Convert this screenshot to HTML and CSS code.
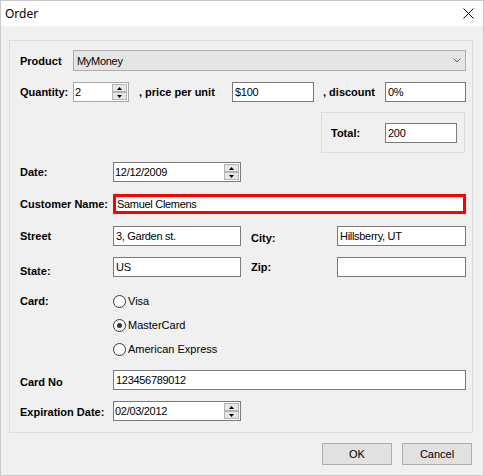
FILE: index.html
```html
<!DOCTYPE html>
<html>
<head>
<meta charset="utf-8">
<title>Order</title>
<link rel="stylesheet" href="styles.css">
</head>
<body>
<div class="window">
  <div class="titlebar">
    <span class="title">Order</span>
    <svg class="close" width="11" height="11" viewBox="0 0 11 11"><path d="M0.5 0.5 L10.5 10.5 M10.5 0.5 L0.5 10.5" stroke="#000" stroke-width="1" fill="none"/></svg>
  </div>
  <div class="client">
    <div class="panel">
      <div class="row r-product">
        <span class="lbl w53">Product</span>
        <div class="combo">
          <span class="val">MyMoney</span>
          <svg class="chev" width="8" height="5" viewBox="0 0 8 5"><path d="M0.5 0.5 L4 4 L7.5 0.5" stroke="#606060" stroke-width="1" fill="none"/></svg>
        </div>
      </div>
      <div class="row r-qty">
        <span class="lbl w53">Quantity:</span>
        <div class="spin light w56">
          <span class="val">2</span>
          <div class="spinbtns">
            <div class="sb"><svg width="5" height="3" viewBox="0 0 5 3"><polygon points="0,3 2.5,0 5,3" fill="#000"/></svg></div>
            <div class="sb"><svg width="5" height="3" viewBox="0 0 5 3"><polygon points="0,0 5,0 2.5,3" fill="#000"/></svg></div>
          </div>
        </div>
        <span class="lbl w93 ml10">, price per unit</span>
        <div class="tb w82"><span class="val">$100</span></div>
        <span class="lbl w62 ml9">, discount</span>
        <div class="tb w81"><span class="val">0%</span></div>
      </div>
      <div class="row r-total">
        <div class="totalbox">
          <span class="lbl w54">Total:</span>
          <div class="tb w72"><span class="val">200</span></div>
        </div>
      </div>
      <div class="row r-date">
        <span class="lbl w93">Date:</span>
        <div class="spin w128">
          <span class="val">12/12/2009</span>
          <div class="spinbtns">
            <div class="sb"><svg width="5" height="3" viewBox="0 0 5 3"><polygon points="0,3 2.5,0 5,3" fill="#000"/></svg></div>
            <div class="sb"><svg width="5" height="3" viewBox="0 0 5 3"><polygon points="0,0 5,0 2.5,3" fill="#000"/></svg></div>
          </div>
        </div>
      </div>
      <div class="row r-cust">
        <span class="lbl w93">Customer Name:</span>
        <div class="tb red w353"><span class="val">Samuel Clemens</span></div>
      </div>
      <div class="row r-street">
        <span class="lbl w93">Street</span>
        <div class="tb w128"><span class="val">3, Garden st.</span></div>
        <span class="lbl w86 ml10 down2">City:</span>
        <div class="tb w129"><span class="val">Hillsberry, UT</span></div>
      </div>
      <div class="row r-state">
        <span class="lbl w93 down4">State:</span>
        <div class="tb w128"><span class="val">US</span></div>
        <span class="lbl w86 ml10">Zip:</span>
        <div class="tb w129"></div>
      </div>
      <div class="radios">
        <div class="rrow">
          <span class="lbl w93">Card:</span>
          <span class="radio"></span><span class="rtext">Visa</span>
        </div>
        <div class="rrow">
          <span class="w93"></span>
          <span class="radio checked"></span><span class="rtext">MasterCard</span>
        </div>
        <div class="rrow">
          <span class="w93"></span>
          <span class="radio"></span><span class="rtext">American Express</span>
        </div>
      </div>
      <div class="row r-cardno">
        <span class="lbl w93 down2">Card No</span>
        <div class="tb w353"><span class="val">123456789012</span></div>
      </div>
      <div class="row r-exp">
        <span class="lbl w93 down1">Expiration Date:</span>
        <div class="spin w128">
          <span class="val">02/03/2012</span>
          <div class="spinbtns">
            <div class="sb"><svg width="5" height="3" viewBox="0 0 5 3"><polygon points="0,3 2.5,0 5,3" fill="#000"/></svg></div>
            <div class="sb"><svg width="5" height="3" viewBox="0 0 5 3"><polygon points="0,0 5,0 2.5,3" fill="#000"/></svg></div>
          </div>
        </div>
      </div>
    </div>
    <div class="buttons">
      <button class="btn">OK</button>
      <button class="btn">Cancel</button>
    </div>
  </div>
</div>
</body>
</html>
```

FILE: styles.css
```css
* { box-sizing: border-box; }

body {
  margin: 0;
  font-family: "Liberation Sans", Arial, sans-serif;
  font-size: 11px;
  color: #000;
}

.window {
  width: 484px;
  height: 476px;
  border: 1px solid #c9c9c9;
  background: #f0f0f0;
  display: flex;
  flex-direction: column;
}

.titlebar {
  height: 25px;
  flex: none;
  background: #fff;
  display: flex;
  align-items: center;
  justify-content: space-between;
  padding: 0 9px 0 4px;
}

.title {
  font-family: "Noto Sans", "Open Sans", sans-serif;
  font-size: 12px;
  line-height: 14px;
  margin-top: 0;
}

.close { display: block; }

.client {
  flex: 1;
  display: flex;
  flex-direction: column;
  padding: 14px 11px 0 8px;
}

.panel {
  width: 464px;
  height: 393px;
  flex: none;
  border: 1px solid #dcdcdc;
  padding-left: 10px;
  display: flex;
  flex-direction: column;
}

.row {
  display: flex;
  align-items: center;
  height: 20px;
  flex: none;
}

.r-product { margin-top: 9px; height: 21px; }
.r-qty { margin-top: 11px; }
.r-total { margin-top: 10px; height: 41px; justify-content: flex-end; padding-right: 7px; }
.r-date { margin-top: 9px; }
.r-cust { margin-top: 12px; }
.r-street { margin-top: 12px; }
.r-state { margin-top: 11px; }
.r-cardno { margin-top: 9px; }
.r-exp { margin-top: 11px; }

.lbl {
  font-weight: bold;
  white-space: nowrap;
  flex: none;
}

.w53 { width: 53px; flex: none; }
.w54 { width: 54px; flex: none; }
.w56 { width: 56px; flex: none; }
.w62 { width: 62px; flex: none; }
.w72 { width: 72px; flex: none; }
.w81 { width: 81px; flex: none; }
.w82 { width: 82px; flex: none; }
.w86 { width: 86px; flex: none; }
.w93 { width: 93px; flex: none; }
.w128 { width: 128px; flex: none; }
.w129 { width: 129px; flex: none; }
.w353 { width: 353px; flex: none; }
.ml9 { margin-left: 9px; }
.ml10 { margin-left: 10px; }
.down1 { position: relative; top: 1px; }
.down2 { position: relative; top: 2px; }
.down4 { position: relative; top: 4px; }

.val {
  letter-spacing: -0.3px;
  white-space: nowrap;
}

.combo {
  width: 393px;
  height: 21px;
  background: #e5e5e5;
  border: 1px solid #adadad;
  display: flex;
  align-items: center;
  justify-content: space-between;
  padding: 0 4px 0 3px;
}

.chev { display: block; margin-right: 0; }

.tb {
  height: 20px;
  background: #fff;
  border: 1px solid #7a7a7a;
  display: flex;
  align-items: center;
  padding-left: 2px;
}

.tb.red {
  border: 3px solid #ff0000;
  padding-left: 1px;
}

.spin {
  height: 20px;
  background: #fff;
  border: 1px solid #7a7a7a;
  display: flex;
  align-items: center;
  padding-left: 1px;
}

.spin.light { border-color: #a6a6a6; }

.spin .val { flex: 1; }

.spinbtns {
  width: 16px;
  height: 100%;
  display: flex;
  flex-direction: column;
  padding: 1px 1px 1px 0;
  flex: none;
}

.sb {
  flex: 1;
  background: #e6e6e6;
  border: 1px solid #b4b4b4;
  display: flex;
  align-items: center;
  justify-content: center;
}

.sb svg { display: block; }

.totalbox {
  width: 144px;
  height: 41px;
  border: 1px solid #dcdcdc;
  display: flex;
  align-items: center;
  padding-left: 9px;
}

.radios {
  margin-top: 12px;
  display: flex;
  flex-direction: column;
  flex: none;
}

.rrow {
  height: 24px;
  display: flex;
  align-items: center;
}

.radio {
  width: 13px;
  height: 13px;
  flex: none;
  border: 1px solid #333;
  border-radius: 50%;
  background: #fff;
  display: flex;
  align-items: center;
  justify-content: center;
}

.radio.checked::after {
  content: "";
  width: 5px;
  height: 5px;
  border-radius: 50%;
  background: #333;
}

.rtext {
  margin-left: 2px;
  white-space: nowrap;
}

.buttons {
  display: flex;
  justify-content: flex-end;
  gap: 10px;
  margin-top: 10px;
}

.btn {
  width: 70px;
  height: 22px;
  background: #e1e1e1;
  border: 1px solid #adadad;
  font-family: "Liberation Sans", Arial, sans-serif;
  font-size: 11px;
  color: #000;
  padding: 0;
  margin: 0;
}
```
